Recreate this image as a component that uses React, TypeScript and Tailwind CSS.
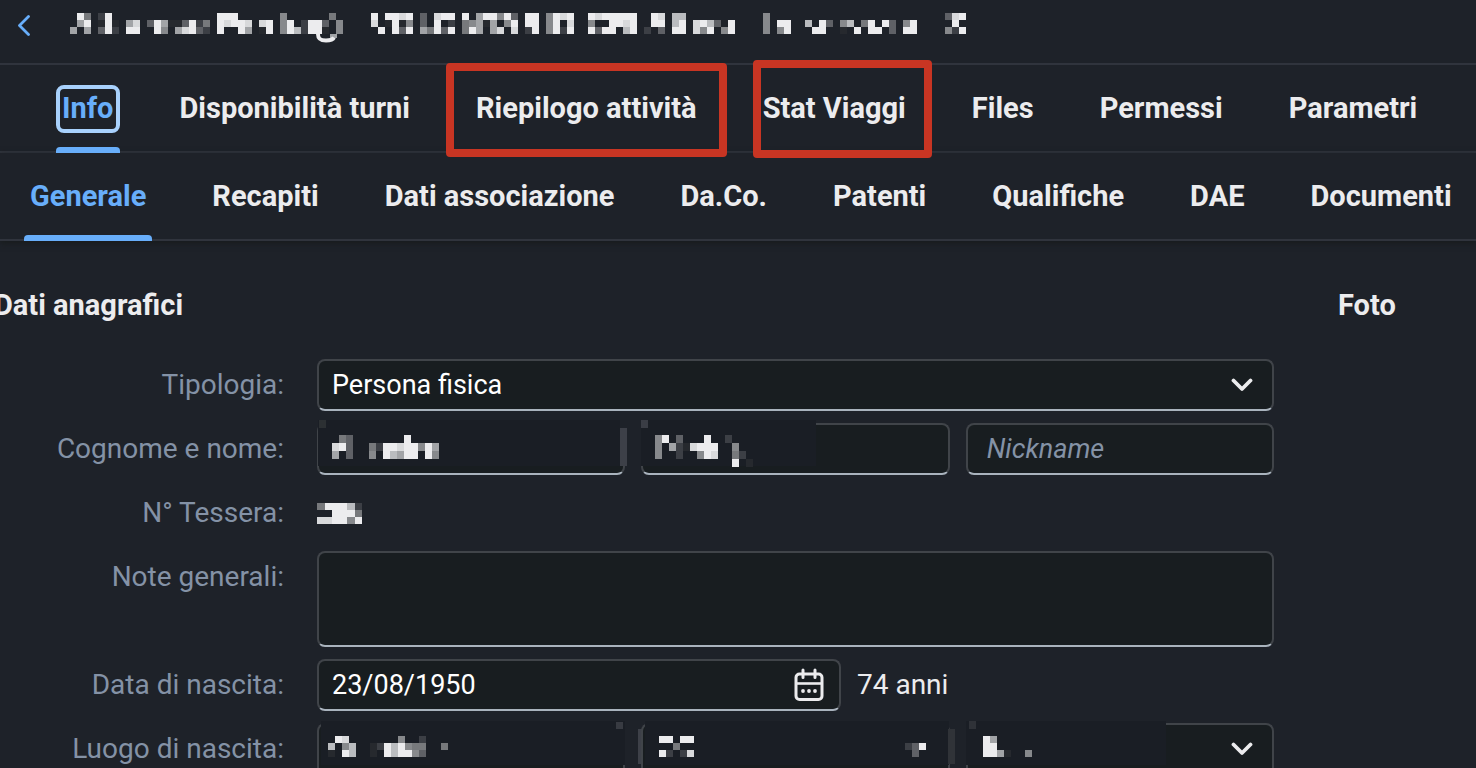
import { clsx } from 'clsx'

type Blocco = [x: number, ...righe: string[]]

const GRIGI = ['#1e2229', '#26292e', '#3c3f45', '#5f6166', '#77797c', '#87898c', '#a2a4a7', '#babcbf', '#d8d9db', '#ececee']

// Ogni cifra è un livello di grigio, il punto lascia la cella vuota
function Mosaico({ blocchi, altezza = 7 }: { blocchi: Blocco[]; altezza?: number }) {
  return (
    <g shapeRendering="crispEdges">
      {blocchi.map(([x, ...righe]) =>
        righe.map((riga, r) =>
          riga.split('').map((c, i) =>
            c === '.' ? null : (
              <rect key={`${x}-${r}-${i}`} x={x + i * 7} y={r * altezza} width={7} height={altezza} fill={GRIGI[Number(c)]} />
            )
          )
        )
      )}
    </g>
  )
}

const NOME_TITOLO: Blocco[] = [
  [0, '.94', '.69', '6.6'],
  [28, '29.', '191', '392'],
  [56, '..', '68', '99'],
  [77, '...', '396', '.95'],
  [98, '......', '113924', '.68932'],
  [147, '999..', '98998', '9..96'],
  [189, '..', '89', '19'],
  [210, '5......4.', '59.2993.5', '5972991.5'],
  [301, '9.', '8.', '.9'],
  [315, '9989', '1915', '.939'],
  [350, '3.899', '3.9.2', '64939'],
  [392, '9.699593', '45616.59', '496.68.8'],
  [455, '99', '99', '29'],
  [476, '5989', '59.8', '5929'],
  [518, '9899999', '5..9989', '9399.79'],
  [574, '.98', '.99', '2.3'],
  [602, '77', '79', '99'],
  [623, '......', '8973.9', '859.59'],
  [693, '5', '5', '5'],
  [707, '..', '99', '59'],
  [735, '....', '7.93', '.99.'],
  [770, '........', '57.49.93', '1.9.99.3'],
  [833, '..', '59', '99'],
  [875, '389', '.9.', '529'],
]

const SCHEDE = ['Info', 'Disponibilità turni', 'Riepilogo attività', 'Stat Viaggi', 'Files', 'Permessi', 'Parametri']
const SEZIONI = ['Generale', 'Recapiti', 'Dati associazione', 'Da.Co.', 'Patenti', 'Qualifiche', 'DAE', 'Documenti']

const GRASSETTO = 'text-[29px] font-bold'

const CAMPO =
  'block w-full rounded-lg border-2 border-[#404449] border-b-[#a9b3bd] bg-[#181d20] px-[13px] text-[27px] leading-8 text-white outline-none'

function Freccia() {
  return (
    <svg className="pointer-events-none absolute right-[21px] top-[18px]" width="22" height="16" viewBox="0 0 22 16" fill="none">
      <path d="M2.5 3.5 11 12 19.5 3.5" stroke="#ececee" strokeWidth="3.8" strokeLinecap="round" strokeLinejoin="round" />
    </svg>
  )
}

function Calendario() {
  return (
    <svg width="30" height="34" viewBox="0 0 30 34" fill="none" stroke="#ececee">
      <rect x="2" y="6" width="26" height="25.5" rx="3.5" strokeWidth="3" />
      <path d="M2 15.5h26" strokeWidth="2.6" />
      <path d="M9 2v7.5M21 2v7.5" strokeWidth="3" strokeLinecap="round" />
      <g fill="#ececee" stroke="none">
        <circle cx="9" cy="23" r="1.9" />
        <circle cx="15" cy="23" r="1.9" />
        <circle cx="21" cy="23" r="1.9" />
      </g>
    </svg>
  )
}

function Etichetta({ htmlFor, children }: { htmlFor?: string; children: string }) {
  return (
    <label htmlFor={htmlFor} className="h-[52px] whitespace-nowrap text-right leading-[52px] text-[#8492a6]">
      {children}
    </label>
  )
}

export default function App() {
  return (
    <div className="h-screen overflow-hidden bg-[#1e2229] font-[Roboto,'Noto_Sans',sans-serif] text-[28px] text-[#ececee]">
      <header className="flex h-[65px] items-center border-b-2 border-[#30343d] pb-3">
        <button aria-label="Indietro" className="ml-[17px] mr-10 flex">
          <svg width="13" height="22" viewBox="0 0 13 22" fill="none">
            <path d="M11.5 1.5 2.5 10.5l9 9" stroke="#68aefa" strokeWidth="2.8" strokeLinecap="round" strokeLinejoin="round" />
          </svg>
        </button>
        <svg className="mt-1" width="898" height="30" viewBox="0 0 898 30">
          <Mosaico blocchi={NOME_TITOLO} />
          <rect x="260" y="21" width="7" height="4" fill="#a2a4a7" />
          <path d="M248 21c0 5 2 6.500 8 6.500 5 0 7-1 8-3" fill="none" stroke="#ececee" strokeWidth="4" />
        </svg>
      </header>

      <nav className={clsx(GRASSETTO, 'flex h-[88px] gap-[54px] border-b-2 border-[#30343d] pl-14')}>
        {SCHEDE.map((s, i) => (
          <button key={s} className="relative -mb-0.5 whitespace-nowrap px-1.5">
            <span className={clsx(i === 0 && 'text-[#68aefa]')}>{s}</span>
            {i === 0 && (
              <>
                <span className="absolute inset-x-0 top-5 h-12 rounded-lg border-4 border-[#a8d1fc]" />
                <span className="absolute inset-x-0 bottom-0 h-1.5 rounded-t bg-[#68aefa]" />
              </>
            )}
            {s === 'Riepilogo attività' && (
              <span className="absolute -bottom-1 -left-6 -right-6 -top-0.5 z-10 rounded border-8 border-[#c83523]" />
            )}
            {s === 'Stat Viaggi' && (
              <span className="absolute -bottom-[5px] -left-1 -right-5 -top-[5px] z-10 rounded border-8 border-[#c83523]" />
            )}
          </button>
        ))}
      </nav>

      <nav className={clsx(GRASSETTO, 'flex h-[88px] gap-[54px] border-b-2 border-[#30343d] pl-6 shadow-[0_2px_6px_#171b1c]')}>
        {SEZIONI.map((s, i) => (
          <button key={s} className="relative -mb-0.5 whitespace-nowrap px-1.5">
            <span className={clsx(i === 0 && 'text-[#68aefa]')}>{s}</span>
            {i === 0 && <span className="absolute inset-x-0 bottom-0 h-1.5 rounded-t bg-[#68aefa]" />}
          </button>
        ))}
      </nav>

      <main className="flex gap-16 pt-11">
        <section className="min-w-0 flex-1">
          <h2 className={clsx(GRASSETTO, '-ml-1.5 leading-10')}>Dati anagrafici</h2>
          <form className="mt-[34px] grid grid-cols-[284px_minmax(0,1fr)] gap-x-[33px] gap-y-3">
            <Etichetta htmlFor="tipologia">Tipologia:</Etichetta>
            <div className="relative">
              <select id="tipologia" className={clsx(CAMPO, 'h-[52px] appearance-none')}>
                <option>Persona fisica</option>
              </select>
              <Freccia />
            </div>

            <Etichetta htmlFor="cognome">Cognome e nome:</Etichetta>
            <div className="grid grid-cols-3 gap-4">
              <div className="relative">
                <input id="cognome" className={clsx(CAMPO, 'h-[52px]')} />
                <svg className="pointer-events-none absolute left-0 -top-1" width="310" height="48" viewBox="0 0 310 48">
                  <rect x="1" y="1" width="307" height="46" fill="#1a1e25" />
                  <rect x="2" y="1" width="7" height="8" fill="#2c3033" />
                  <rect x="303" y="1" width="7" height="8" fill="#1e2229" />
                  <rect x="303" y="9" width="7" height="38" fill="#3d4048" />
                  <g transform="translate(0 16)">
                    <Mosaico altezza={8} blocchi={[[15, '.43', '893', '6.3'], [52, '.....9', '4299899596', '5.97699.95']]} />
                  </g>
                </svg>
              </div>
              <div className="relative">
                <input aria-label="Nome" className={clsx(CAMPO, 'h-[52px]')} />
                <svg className="pointer-events-none absolute left-0 -top-1" width="176" height="48" viewBox="0 0 176 48">
                  <rect y="1" width="175" height="46" fill="#1a1e25" />
                  <rect y="1" width="7" height="8" fill="#3a3d45" />
                  <g transform="translate(0 16)">
                    <Mosaico altezza={8} blocchi={[[14, '59.3...9..2', '5.6218999..5', '5..2..598..42', '...........9.1']]} />
                  </g>
                </svg>
              </div>
              <input aria-label="Nickname" placeholder="Nickname" className={clsx(CAMPO, 'h-[52px] pl-[19px] placeholder:italic placeholder:text-[#8492a6]')} />
            </div>

            <Etichetta>N° Tessera:</Etichetta>
            <div className="flex items-center">
              <svg width="45" height="21" viewBox="0 0 42 21" preserveAspectRatio="none">
                <Mosaico blocchi={[[0, '499972', '..9994', '889959']]} />
              </svg>
            </div>

            <Etichetta htmlFor="note">Note generali:</Etichetta>
            <textarea id="note" className={clsx(CAMPO, 'h-24 resize-none')} />

            <Etichetta htmlFor="nascita">Data di nascita:</Etichetta>
            <div className="flex items-center gap-4">
              <div className="relative w-[524px]">
                <input id="nascita" defaultValue="23/08/1950" className={clsx(CAMPO, 'h-[52px] pr-14')} />
                <button type="button" aria-label="Apri calendario" className="absolute right-[17px] top-[9px]">
                  <Calendario />
                </button>
              </div>
              <span>74 anni</span>
            </div>

            <Etichetta htmlFor="luogo">Luogo di nascita:</Etichetta>
            <div className="grid grid-cols-3 gap-4">
              <div className="relative">
                <input id="luogo" className={clsx(CAMPO, 'h-[52px]')} />
                <svg className="pointer-events-none absolute left-0 -top-0.5" width="330" height="48" viewBox="0 0 330 48">
                  <rect x="4" width="304" height="44" fill="#1a1e25" />
                  <rect x="299" y="1" width="7" height="7" fill="#383b42" />
                  <rect x="321" y="8" width="7" height="35" fill="#3d4048" />
                  <g transform="translate(0 15)">
                    <Mosaico blocchi={[[11, '.98.', '7.57', '1.97'], [53, '....5..2', '12979544', '1.979953'], [124, '.', '4']]} />
                  </g>
                </svg>
              </div>
              <div className="relative">
                <select aria-label="Provincia" className={clsx(CAMPO, 'h-[52px] appearance-none')} />
                <svg className="pointer-events-none absolute left-0 -top-0.5" width="316" height="48" viewBox="0 0 316 48">
                  <rect x="4" width="304" height="44" fill="#1a1e25" />
                  <rect x="307" y="8" width="7" height="35" fill="#303338" />
                  <g transform="translate(0 15)">
                    <Mosaico blocchi={[[18, '99.99', '..4..', '92.28'], [264, '...', '239', '.3.']]} />
                  </g>
                </svg>
              </div>
              <div className="relative">
                <select aria-label="Nazione" className={clsx(CAMPO, 'h-[52px] appearance-none')} />
                <svg className="pointer-events-none absolute left-0 -top-0.5" width="200" height="48" viewBox="0 0 200 48">
                  <rect width="200" height="44" fill="#1a1e25" />
                  <rect x="3" width="7" height="8" fill="#2f3238" />
                  <g transform="translate(0 15)">
                    <Mosaico blocchi={[[17, '96', '99', '9961'], [59, '.', '.', '5']]} />
                  </g>
                </svg>
                <Freccia />
              </div>
            </div>
          </form>
        </section>

        <aside className="w-[138px]">
          <h2 className={clsx(GRASSETTO, 'leading-10')}>Foto</h2>
        </aside>
      </main>
    </div>
  )
}
